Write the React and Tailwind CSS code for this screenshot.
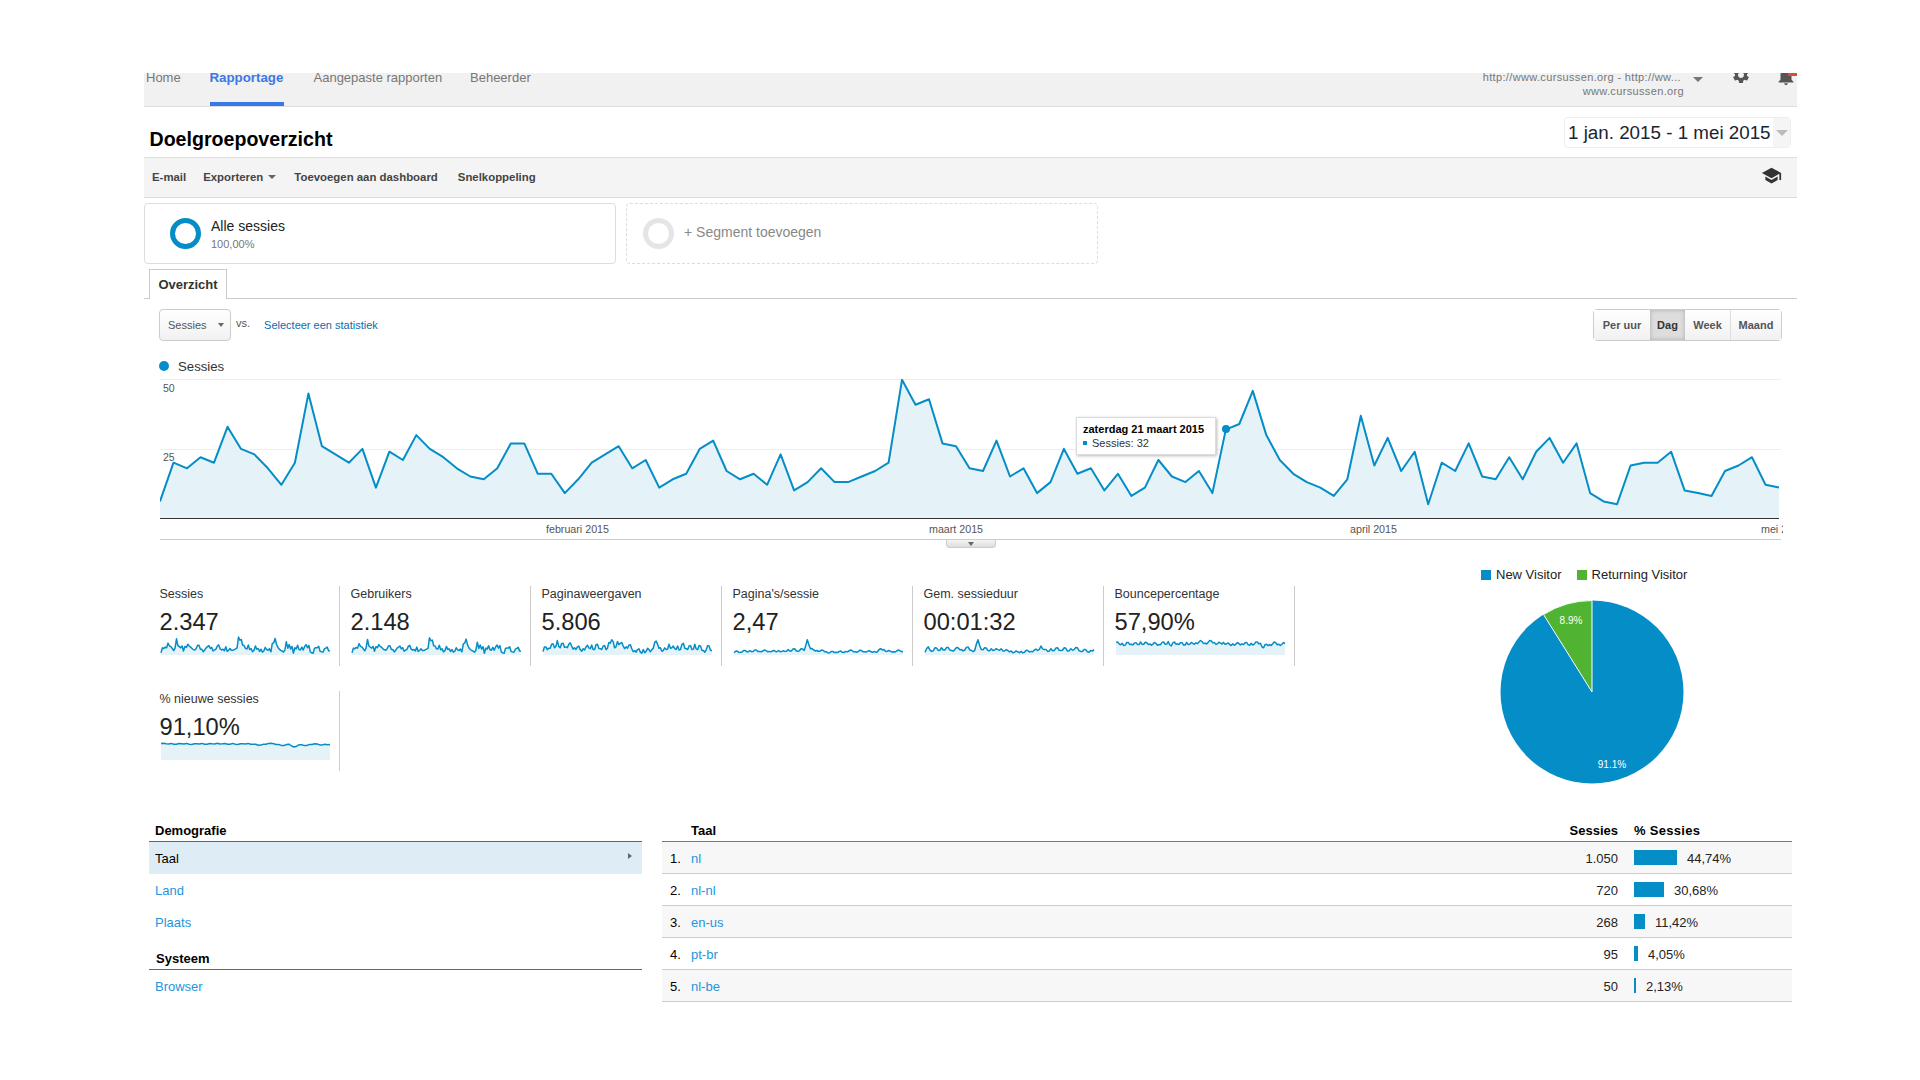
import React from 'react';
import { MdSettings, MdNotifications, MdSchool, MdArrowDropDown } from 'react-icons/md';

const SESSIONS = [6,20,18,22,20,33,25,23,18,12,20,45,26,23,20,25,11,24,21,30,25,22,18,15,14,18,27,27,16,16,9,14,20,23,26,18,21,11,14,16,25,28,17,14,16,12,23,10,13,18,13,13,15,17,20,50,41,43,27,26,18,17,28,15,18,9,13,25,16,18,10,16,8,11,21,15,13,17,9,32,34,46,30,21,16,13,11,8,14,37,19,29,17,24,5,20,17,27,15,14,22,14,24,29,20,27,9,6,5,19,20,20,24,10,9,8,17,19,22,12,11];

function densify(data, wobble) {
  const out = [];
  data.forEach((v, i) => {
    out.push(v);
    if (i < data.length - 1) out.push((v + data[i + 1]) / 2 + (i % 3 === 0 ? wobble : -wobble));
  });
  return out;
}

const STATS = [
  { label: 'Sessies', value: '2.347', data: SESSIONS, max: 50 },
  { label: 'Gebruikers', value: '2.148', data: SESSIONS.map((v) => v * 0.96), max: 50 },
  { label: 'Paginaweergaven', value: '5.806', max: 100, data: densify([20,45,38,60,40,80,40,65,45,60,50,40,45,30,35,45,40,55,30,60,35,50,30,70,85,40,75,65,50,45,55,35,25,30,15,30,20,30,30,70,60,40,25,30,60,40,35,50,30,65,35,50,30,60,30,50,25,30,50,25], 12) },
  { label: "Pagina's/sessie", value: '2,47', max: 100, data: densify([12,22,15,25,18,25,20,28,20,22,25,20,22,20,25,20,20,30,22,35,20,35,25,85,35,28,25,22,25,18,12,20,15,20,15,20,22,25,18,20,25,18,22,18,20,18,35,30,20,22,18,22,25,20], 4) },
  { label: 'Gem. sessieduur', value: '00:01:32', max: 100, data: densify([15,45,20,40,25,40,28,42,25,30,40,30,28,45,25,25,85,30,40,25,35,28,30,35,22,25,22,15,18,20,15,25,20,28,25,50,30,20,35,25,40,25,40,22,35,30,40,20,30,18,25,30], 6) },
  { label: 'Bouncepercentage', value: '57,90%', max: 100, data: densify([70,62,65,55,70,60,66,58,72,60,68,62,60,65,58,70,60,75,50,72,62,68,55,70,60,65,68,72,75,66,70,78,70,62,66,70,62,58,62,60,64,62,68,58,65,60,72,65,40,60,58,62,68,60,60,64], 7) },
  { label: '% nieuwe sessies', value: '91,10%', max: 100, data: densify([92,90,92,88,90,92,86,90,92,88,90,93,90,88,92,86,90,92,88,82,88,92,90,86,80,88,72,85,80,86,90,84,88,86], 2) },
];

const ROWS = [
  { name: 'nl', sessions: '1.050', pct: '44,74%', bar: 'w-[43px]' },
  { name: 'nl-nl', sessions: '720', pct: '30,68%', bar: 'w-[30px]' },
  { name: 'en-us', sessions: '268', pct: '11,42%', bar: 'w-[11px]' },
  { name: 'pt-br', sessions: '95', pct: '4,05%', bar: 'w-[4px]' },
  { name: 'nl-be', sessions: '50', pct: '2,13%', bar: 'w-[2px]' },
];

function linePoints(data, w, h, max) {
  const step = w / (data.length - 1);
  return data.map((v, i) => `${(i * step).toFixed(1)},${(h - (v / max) * h).toFixed(1)}`).join(' ');
}

function Sparkline({ data, max }) {
  const pts = linePoints(data, 169, 18, max);
  return (
    <svg width="169" height="18" className="block overflow-visible">
      <polygon points={`0,18 ${pts} 169,18`} fill="#e5f3f9" />
      <polyline points={pts} fill="none" stroke="#058dc7" strokeWidth="1.5" strokeLinejoin="round" />
    </svg>
  );
}

function MainChart() {
  const pts = linePoints(SESSIONS, 1619, 139, 50.3);
  return (
    <svg width="1621" height="141" className="block">
      <line x1="0" y1="0.5" x2="1621" y2="0.5" stroke="#eee" />
      <line x1="0" y1="70.5" x2="1621" y2="70.5" stroke="#eee" />
      <polygon points={`0,139 ${pts} 1619,139`} fill="#e5f3f9" />
      <polyline points={pts} fill="none" stroke="#058dc7" strokeWidth="2" strokeLinejoin="round" />
      <line x1="0" y1="139.5" x2="1619" y2="139.5" stroke="#333" strokeWidth="1.2" />
      <circle cx="1066" cy="50" r="4" fill="#058dc7" />
    </svg>
  );
}

function Pie() {
  return (
    <svg width="190" height="190" className="block mt-[16px] ml-[16px]">
      <circle cx="95" cy="95" r="91.5" fill="#058dc7" />
      <path d="M95 95 L46.5 17.5 A91.5 91.5 0 0 1 95 3.5 Z" fill="#50b432" stroke="#fff" strokeWidth="1" />
      <text x="74" y="26.5" textAnchor="middle" fill="#fff" fontSize="10">8.9%</text>
      <text x="115" y="170.5" textAnchor="middle" fill="#fff" fontSize="10">91.1%</text>
    </svg>
  );
}

export default function App() {
  return (
    <div className="w-[1920px] h-[1080px] bg-white pt-[73px] pl-[144px] text-[#222] font-['Liberation_Sans',Arial,sans-serif] overflow-hidden">
      <div className="w-[1653px]">
        {/* Top nav */}
        <div className="flex h-[34px] overflow-hidden bg-[#f1f1f1] border-b border-[#ddd] text-[13px] leading-[9px] text-[#777]">
          <div className="ml-[2px] w-[63.5px]">Home</div>
          <div className="w-[74.5px] h-full border-b-4 border-[#3b78e7] text-[#3b78e7] font-bold text-[13.3px]">Rapportage</div>
          <div className="ml-[29.5px] w-[156.5px]">Aangepaste rapporten</div>
          <div>Beheerder</div>
          <div className="ml-auto flex">
            <div className="flex flex-col items-end text-[11px] text-[#777] tracking-[0.35px]">
              <div className="leading-[8px]">http://www.cursussen.org - http://ww...</div>
              <div className="mt-[6px] leading-[9px] mr-[-3px]">www.cursussen.org</div>
            </div>
            <MdArrowDropDown className="ml-[5px] -mt-[6px] text-[#777]" size={24} />
            <MdSettings className="ml-[21px] -mt-[8px] text-[#555]" size={20} />
            <div className="relative ml-[24px] w-[22px] -mt-[8px]">
              <MdNotifications className="text-[#555]" size={22} />
              <div className="absolute right-0 top-[8px] w-[9px] h-[3px] bg-[#dd4b39]" />
            </div>
          </div>
        </div>

        {/* Title */}
        <div className="flex h-[50px]">
          <h1 className="ml-[5.5px] mt-[22px] text-[19.6px] leading-[20px] font-bold text-black">Doelgroepoverzicht</h1>
          <div className="ml-auto mr-[6px] mt-[10px] h-[31px] w-[227px] flex rounded-sm border border-[#eee]">
            <div className="w-[208px] pl-[3px] text-[18.8px] leading-[29px] text-[#1a2433] whitespace-nowrap">1 jan. 2015 - 1 mei 2015</div>
            <div className="flex-1 flex items-center justify-center bg-[#f5f5f5]">
              <div className="w-0 h-0 border-x-[6px] border-x-transparent border-t-[6px] border-t-[#bbb]" />
            </div>
          </div>
        </div>

        {/* Toolbar */}
        <div className="flex items-center h-[41px] bg-[#f4f4f4] border-y border-[#ddd] text-[11.4px] font-bold text-[#444]">
          <span className="ml-[8px]">E-mail</span>
          <span className="ml-[17px] flex items-center">
            Exporteren
            <span className="ml-[5px] w-0 h-0 border-x-[4px] border-x-transparent border-t-[4px] border-t-[#666]" />
          </span>
          <span className="ml-[18px]">Toevoegen aan dashboard</span>
          <span className="ml-[20px]">Snelkoppeling</span>
          <MdSchool className="ml-auto mr-[15px] mb-[4px] text-[#333]" size={21} />
        </div>

        {/* Segments */}
        <div className="flex gap-[10px] mt-[5px] h-[61px]">
          <div className="w-[472px] flex items-center pl-[25px] rounded-sm border border-[#ddd]">
            <div className="w-[31px] h-[31px] rounded-full border-[5px] border-[#058dc7]" />
            <div className="ml-[10px]">
              <div className="text-[14px] leading-[16px] text-[#222]">Alle sessies</div>
              <div className="mt-[4px] text-[11px] leading-[12px] text-[#777]">100,00%</div>
            </div>
          </div>
          <div className="w-[472px] flex items-center pl-[16px] rounded-sm border border-dashed border-[#ddd]">
            <div className="w-[31px] h-[31px] rounded-full border-[5px] border-[#e5e5e5]" />
            <div className="ml-[10px] mb-[3px] text-[14px] text-[#888]">+ Segment toevoegen</div>
          </div>
        </div>

        {/* Tab */}
        <div className="mt-[5px] h-[30px] pl-[5px] border-b border-[#ccc]">
          <div className="w-[78px] h-[30px] flex items-center justify-center bg-white border border-b-0 border-[#ccc] text-[13px] font-bold text-[#333]">Overzicht</div>
        </div>

        {/* Controls */}
        <div className="mt-[10px] flex h-[32px] pl-[15px] pr-[15px]">
          <div className="w-[72px] flex items-center pl-[8px] rounded-sm border border-[#ccc] bg-linear-to-b from-white to-[#f1f1f1] text-[11px] text-[#555]">
            Sessies
            <span className="ml-[11px] w-0 h-0 border-x-[3.5px] border-x-transparent border-t-[4px] border-t-[#666]" />
          </div>
          <span className="ml-[5px] mt-[6px] text-[11px] text-[#555]">vs.</span>
          <span className="ml-[14px] mt-[9px] leading-[14px] text-[11px] text-[#0a6cb0]">Selecteer een statistiek</span>
          <div className="ml-auto flex rounded-sm border border-[#ccc] text-[11px] font-bold text-[#555]">
            <div className="w-[56px] flex items-center justify-center bg-linear-to-b from-white to-[#f1f1f1]">Per uur</div>
            <div className="w-[35px] flex items-center justify-center bg-[#ddd] shadow-[inset_0_0_4px_#aaa] text-[#333]">Dag</div>
            <div className="w-[46px] flex items-center justify-center bg-linear-to-b from-white to-[#f1f1f1] border-r border-[#ddd]">Week</div>
            <div className="w-[50px] flex items-center justify-center bg-linear-to-b from-white to-[#f1f1f1]">Maand</div>
          </div>
        </div>

        {/* Legend */}
        <div className="mt-[18px] h-[14px] ml-[15px] flex items-center text-[13.2px] text-[#333]">
          <span className="w-[10px] h-[10px] rounded-full bg-[#058dc7]" />
          <span className="ml-[9px] pt-[1px]">Sessies</span>
        </div>

        {/* Chart */}
        <div className="relative mt-[6px] ml-[16px] w-[1621px] h-[161px] border-b border-[#ccc]">
          <MainChart />
          <span className="absolute left-[3px] top-[3px] text-[10.5px] leading-[12px] text-[#555]">50</span>
          <span className="absolute left-[3px] top-[72px] text-[10.5px] leading-[12px] text-[#555]">25</span>
          <span className="absolute left-[386px] top-[144px] text-[10.7px] leading-[12px] text-[#555]">februari 2015</span>
          <span className="absolute left-[769px] top-[144px] text-[10.7px] leading-[12px] text-[#555]">maart 2015</span>
          <span className="absolute left-[1190px] top-[144px] text-[10.7px] leading-[12px] text-[#555]">april 2015</span>
          <span className="absolute left-[1601px] top-[144px] w-[22px] overflow-hidden whitespace-nowrap text-[10.7px] leading-[12px] text-[#555]">mei 2015</span>
          <div className="absolute left-[916px] top-[38px] w-[140px] h-[38px] pl-[6px] pt-[4px] bg-white border border-[#ddd] shadow-[1px_1px_3px_#bbb] text-[11px] leading-[14px]">
            <div className="font-bold text-black whitespace-nowrap">zaterdag 21 maart 2015</div>
            <div className="flex items-center text-[#333]">
              <span className="w-[4px] h-[4px] bg-[#058dc7] mr-[5px]" />
              Sessies: 32
            </div>
          </div>
        </div>
        <div className="ml-[802px] w-[50px] h-[8px] flex justify-center bg-linear-to-b from-[#f5f5f5] to-[#ddd] border-x border-b border-[#ccc] rounded-b-sm">
          <span className="mt-[2px] w-0 h-0 border-x-[3px] border-x-transparent border-t-[4px] border-t-[#666]" />
        </div>

        {/* Stats and pie */}
        <div className="flex h-[272px]">
          <div className="ml-[15.5px] mt-[38px] w-[1146px] h-[184px] grid grid-cols-[repeat(6,180.5px)] auto-rows-[80px] gap-x-[10.5px] gap-y-[25px]">
            {STATS.map((s) => (
              <div key={s.label} className="border-r border-[#ccc]">
                <div className="mt-[1px] text-[12.5px] leading-[14px] text-[#333]">{s.label}</div>
                <div className="mt-[7px] text-[23.7px] leading-[28px] text-[#222]">{s.value}</div>
                <div className="mt-[1px] ml-[1.5px]"><Sparkline data={s.data} max={s.max} /></div>
              </div>
            ))}
          </div>
          <div className="ml-[175.5px] pt-[20px]">
            <div className="flex items-center h-[14px] text-[13px] text-[#222]">
              <span className="w-[10px] h-[10px] bg-[#058dc7]" />
              <span className="ml-[5px]">New Visitor</span>
              <span className="ml-[15px] w-[10px] h-[10px] bg-[#50b432]" />
              <span className="ml-[5px]">Returning Visitor</span>
            </div>
            <div className="-mt-[1px]"><Pie /></div>
          </div>
        </div>

        {/* Tables */}
        <div className="flex text-[13px]">
          <div className="ml-[5px] w-[493px]">
            <div className="flex items-center h-[22px] pl-[6px] pt-[1px] border-b border-[#666] font-bold text-black">Demografie</div>
            <div className="relative flex items-center h-[32px] pl-[6px] pt-[1px] bg-[#deedf5] text-black">
              Taal
              <span className="absolute right-[10px] top-[11px] w-0 h-0 border-y-[3.5px] border-y-transparent border-l-[4px] border-l-[#666]" />
            </div>
            <div className="flex items-center h-[32px] pl-[6px] pt-[1px] text-[#1e95dc]">Land</div>
            <div className="flex items-center h-[32px] pl-[6px] pt-[1px] text-[#1e95dc]">Plaats</div>
            <div className="mt-[10px] flex items-center h-[22px] pl-[7px] pt-[1px] border-b border-[#666] font-bold text-black">Systeem</div>
            <div className="flex items-center h-[32px] pl-[6px] pt-[1px] text-[#1e95dc]">Browser</div>
          </div>
          <div className="ml-[20px] w-[1130px]">
            <div className="flex items-center h-[22px] pt-[1px] border-b border-[#777] font-bold text-black">
              <span className="w-[29px]" />
              <span className="flex-1">Taal</span>
              <span className="w-[80px] pr-[16px] text-right">Sessies</span>
              <span className="w-[158px] tracking-[0.3px]">% Sessies</span>
            </div>
            {ROWS.map((r, i) => (
              <div key={r.name} className={`flex items-center h-[32px] pt-[2px] border-b border-[#ccc] ${i % 2 === 0 ? 'bg-[#f7f7f7]' : 'bg-white'}`}>
                <span className="w-[29px] pl-[8px] text-black">{i + 1}.</span>
                <span className="flex-1 text-[#1e95dc]">{r.name}</span>
                <span className="w-[80px] pr-[16px] text-right text-[#222]">{r.sessions}</span>
                <span className="w-[158px] flex items-center text-[#222]">
                  <span className={`${r.bar} h-[15px] -mt-[2px] bg-[#058dc7]`} />
                  <span className="ml-[10px]">{r.pct}</span>
                </span>
              </div>
            ))}
          </div>
        </div>
      </div>
    </div>
  );
}
